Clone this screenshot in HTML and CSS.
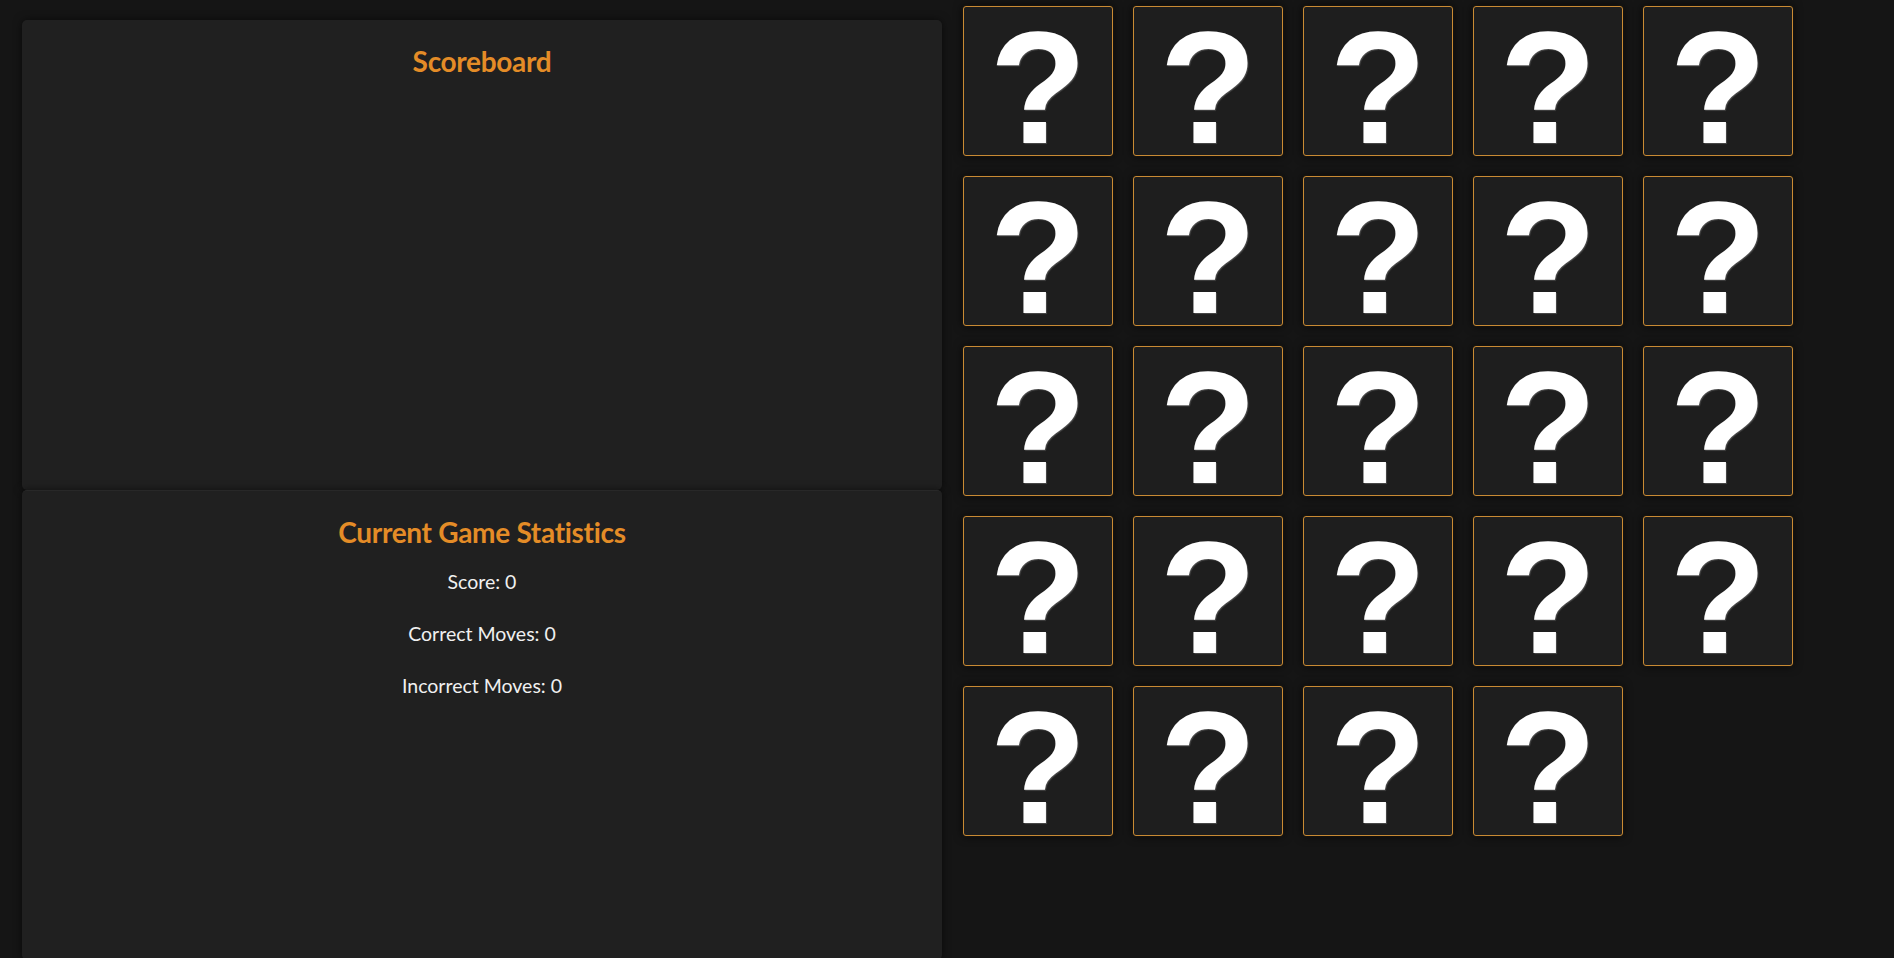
FILE: index.html
```html
<!DOCTYPE html>
<html lang="en">
<head>
<meta charset="utf-8">
<title>Memory Game</title>
<link rel="stylesheet" href="styles.css">
</head>
<body>
<div class="layout">
  <aside class="sidebar">
    <section class="panel scoreboard">
      <h2 class="panel-title">Scoreboard</h2>
    </section>
    <section class="panel stats">
      <h2 class="panel-title">Current Game Statistics</h2>
      <p class="stat">Score: 0</p>
      <p class="stat">Correct Moves: 0</p>
      <p class="stat">Incorrect Moves: 0</p>
    </section>
  </aside>
  <main class="board">
    <div class="card"><span class="mark">?</span></div>
    <div class="card"><span class="mark">?</span></div>
    <div class="card"><span class="mark">?</span></div>
    <div class="card"><span class="mark">?</span></div>
    <div class="card"><span class="mark">?</span></div>
    <div class="card"><span class="mark">?</span></div>
    <div class="card"><span class="mark">?</span></div>
    <div class="card"><span class="mark">?</span></div>
    <div class="card"><span class="mark">?</span></div>
    <div class="card"><span class="mark">?</span></div>
    <div class="card"><span class="mark">?</span></div>
    <div class="card"><span class="mark">?</span></div>
    <div class="card"><span class="mark">?</span></div>
    <div class="card"><span class="mark">?</span></div>
    <div class="card"><span class="mark">?</span></div>
    <div class="card"><span class="mark">?</span></div>
    <div class="card"><span class="mark">?</span></div>
    <div class="card"><span class="mark">?</span></div>
    <div class="card"><span class="mark">?</span></div>
    <div class="card"><span class="mark">?</span></div>
    <div class="card"><span class="mark">?</span></div>
    <div class="card"><span class="mark">?</span></div>
    <div class="card"><span class="mark">?</span></div>
    <div class="card"><span class="mark">?</span></div>
  </main>
</div>
</body>
</html>
```

FILE: styles.css
```css
* { box-sizing: border-box; }

html, body {
  margin: 0;
  padding: 0;
  background: #151515;
  height: 100%;
  overflow: hidden;
}

body {
  font-family: Lato, "Open Sans", "Liberation Sans", sans-serif;
  color: #ececec;
}

.layout {
  display: flex;
  align-items: flex-start;
  gap: 21px;
  padding-left: 22px;
}

.sidebar {
  width: 920px;
  margin-top: 20px;
  display: flex;
  flex-direction: column;
}

.panel {
  height: 470px;
  background: #202020;
  border-radius: 5px;
  box-shadow: 0 0 8px rgba(0, 0, 0, 0.55);
  padding-top: 25px;
  text-align: center;
}

.stats {
  border-top: 1px solid #282828;
}

.panel-title {
  margin: 0 0 20.5px;
  font-size: 28px;
  font-weight: 700;
  letter-spacing: -0.3px;
  color: #e48c27;
  line-height: 1.2;
}

.stat {
  margin: 0 0 28.6px;
  font-size: 19.5px;
  line-height: 1.2;
  color: #f0f0f0;
}

.board {
  margin-top: 6px;
  display: grid;
  grid-template-columns: repeat(5, 150px);
  grid-auto-rows: 150px;
  gap: 20px;
}

.card {
  background: #1e1e1e;
  border: 1px solid #c98a34;
  border-radius: 3px;
  box-shadow: 0 0 10px rgba(0, 0, 0, 0.75), 0 0 3px rgba(201, 138, 52, 0.15);
  display: flex;
  align-items: flex-start;
  justify-content: center;
}

.mark {
  font-family: "Liberation Sans", Arial, sans-serif;
  font-weight: 700;
  font-size: 159px;
  line-height: 176px;
  margin-top: -7px;
  color: #ffffff;
  text-shadow: 1px 1px 1px rgba(120, 120, 120, 0.5);
}
```
